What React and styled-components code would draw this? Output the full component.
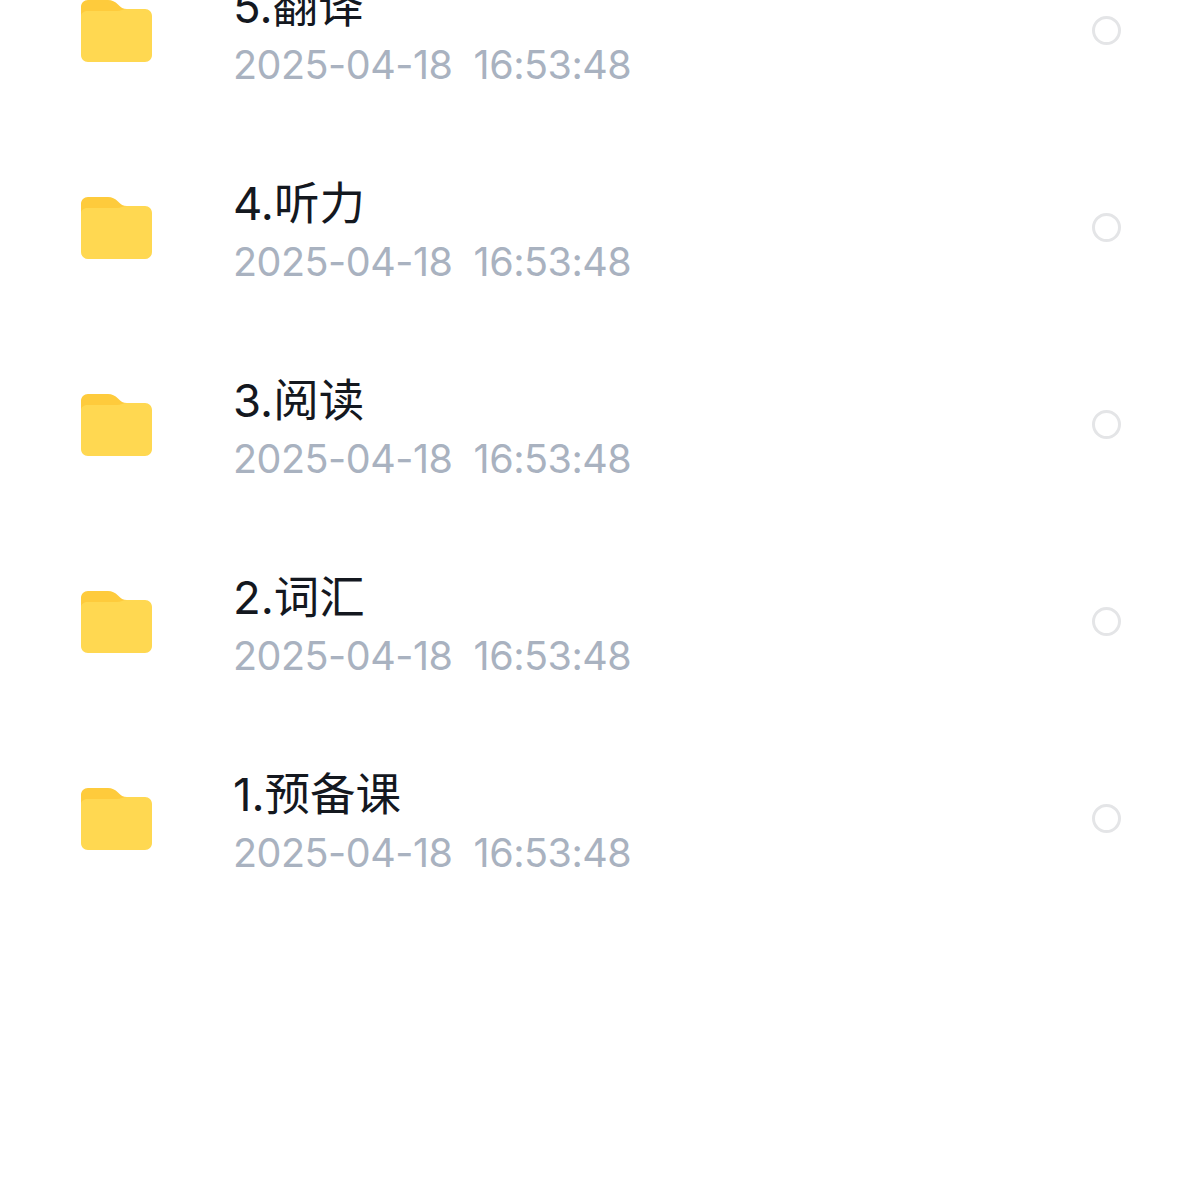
import React from "react";
import styled, {createGlobalStyle} from "styled-components";

const GlobalStyle = createGlobalStyle`
    html, body {
        background: #fff;
        height: 1200px;
        margin: 0;
        overflow: hidden;
    }
`

const FileList = styled.ul`
    list-style: none;
    margin: -67px 0 0 0;
    padding: 0 79px 0 81px;
`

const FileRow = styled.li`
    align-items: center;
    display: flex;
    height: 197px;
`

const FolderIcon = styled.svg`
    display: block;
    flex: none;
    height: 62px;
    margin-bottom: 2px;
    width: 71px;
`

const FileInfo = styled.div`
    display: flex;
    flex: 1;
    flex-direction: column;
    margin-left: 81px;
    padding-top: 9px;
`

const FileName = styled.div`
    color: #14181f;
    font-family: Inter, "Noto Sans CJK SC", sans-serif;
    font-size: 45.5px;
    line-height: 58px;
`

const FileDate = styled.div`
    color: #a9b2c0;
    font-family: Inter, "Noto Sans CJK SC", sans-serif;
    font-size: 39.5px;
    letter-spacing: -0.5px;
    line-height: 58px;
    white-space: pre;
`

const SelectCircle = styled.span`
    border: 3px solid #e4e5e7;
    border-radius: 50%;
    box-sizing: border-box;
    flex: none;
    height: 29px;
    margin-bottom: 2px;
    width: 29px;
`

const files = ["5.翻译", "4.听力", "3.阅读", "2.词汇", "1.预备课"]

const Folder = () => (
    <FolderIcon viewBox="0 0 71 62">
        <path d="M7 0H27C31 0 34 1.5 37 4.5C40 7.5 42 9 46 9V20H0V7C0 3 3 0 7 0Z" fill="#fecb3c"/>
        <path d="M0 16C0 13 3 11 7 11H36C40 11 42 9 46 9H64C68 9 71 12 71 16V55C71 59 68 62 64 62H7C3 62 0 59 0 55Z" fill="#ffd851"/>
    </FolderIcon>
)

export default function App() {
    return (
        <>
            <GlobalStyle/>
            <FileList>
                {files.map(name => (
                    <FileRow key={name}>
                        <Folder/>
                        <FileInfo>
                            <FileName>{name}</FileName>
                            <FileDate>2025-04-18  16:53:48</FileDate>
                        </FileInfo>
                        <SelectCircle/>
                    </FileRow>
                ))}
            </FileList>
        </>
    )
}
